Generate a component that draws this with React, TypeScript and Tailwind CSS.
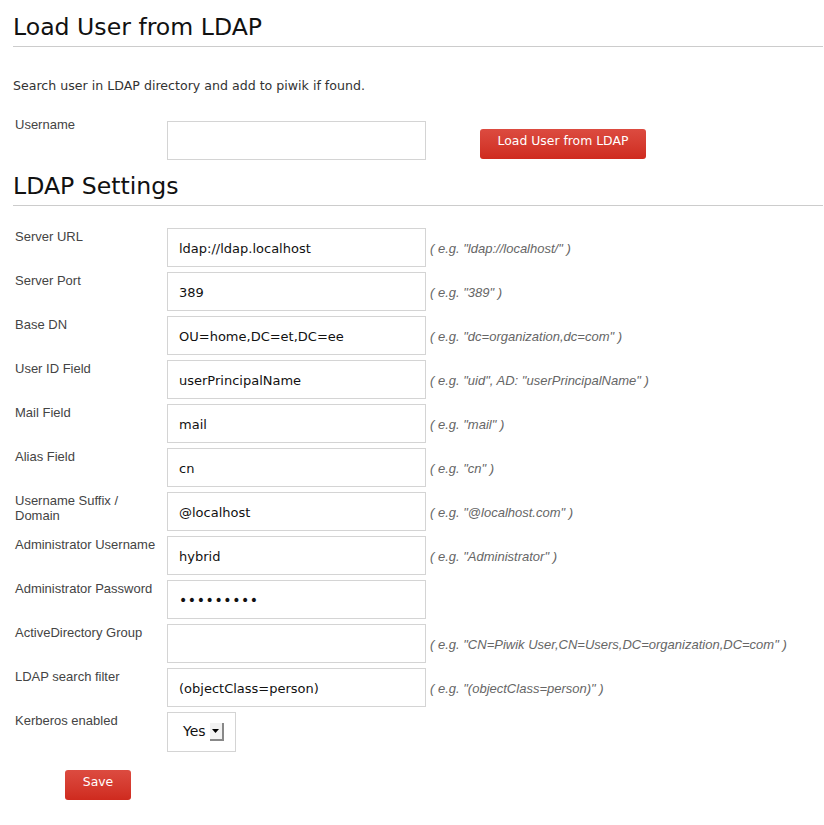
import React from "react";

const dv = { fontFamily: '"DejaVu Sans", sans-serif' } as const;
const lib = { fontFamily: '"Liberation Sans", Arial, sans-serif' } as const;

type Row = { label: string; value?: string; hint?: string; password?: boolean };

const rows: Row[] = [
  { label: "Server URL", value: "ldap://ldap.localhost", hint: '( e.g. "ldap://localhost/" )' },
  { label: "Server Port", value: "389", hint: '( e.g. "389" )' },
  { label: "Base DN", value: "OU=home,DC=et,DC=ee", hint: '( e.g. "dc=organization,dc=com" )' },
  { label: "User ID Field", value: "userPrincipalName", hint: '( e.g. "uid", AD: "userPrincipalName" )' },
  { label: "Mail Field", value: "mail", hint: '( e.g. "mail" )' },
  { label: "Alias Field", value: "cn", hint: '( e.g. "cn" )' },
  { label: "Username Suffix / Domain", value: "@localhost", hint: '( e.g. "@localhost.com" )' },
  { label: "Administrator Username", value: "hybrid", hint: '( e.g. "Administrator" )' },
  { label: "Administrator Password", value: "•••••••••", password: true },
  { label: "ActiveDirectory Group", value: "", hint: '( e.g. "CN=Piwik User,CN=Users,DC=organization,DC=com" )' },
  { label: "LDAP search filter", value: "(objectClass=person)", hint: '( e.g. "(objectClass=person)" )' },
];

function Label({ children, className }: { children: React.ReactNode; className?: string }) {
  return (
    <div className={"w-[146px] mr-[8px] pl-[2px] text-[13px] leading-[15px] text-[#444] " + (className ?? "pt-[1px]")} style={lib}>
      {children}
    </div>
  );
}

function Input({ value, password }: { value?: string; password?: boolean }) {
  return (
    <div className="w-[259px] h-[39px] border border-[#d4d4d4] bg-white flex items-center pl-[11px] pt-[2px]">
      <span className={password ? "text-[14px] tracking-[0.6px] text-[#111]" : "text-[13px] text-[#111]"} style={dv}>
        {value}
      </span>
    </div>
  );
}

function Hint({ children }: { children?: React.ReactNode }) {
  return (
    <div className="ml-[4px] pt-[2px] self-center text-[13px] italic text-[#666]" style={lib}>
      {children}
    </div>
  );
}

function RedButton({ children, className }: { children: React.ReactNode; className?: string }) {
  return (
    <div className={"h-[30px] rounded-[3px] bg-gradient-to-b from-[#dc4b40] to-[#cf2a1e] text-white text-[12.4px] flex items-center justify-center pb-[5px] " + (className ?? "")} style={dv}>
      {children}
    </div>
  );
}

export default function App() {
  return (
    <div className="bg-white w-[824px] min-h-[825px] pl-[13px] pr-[1px]" style={dv}>
      <h2 className="text-[23.6px] leading-[28px] pt-[13px] pb-[5px] border-b border-[#ccc] text-[#111]">
        Load User from LDAP
      </h2>
      <p className="text-[12.6px] text-[#333] mt-[30px]">Search user in LDAP directory and add to piwik if found.</p>
      <div className="flex mt-[25px] h-[39px]">
        <Label className="-mt-[4px]">Username</Label>
        <Input />
        <RedButton className="ml-[54px] mt-[8px] w-[166px]">Load User from LDAP</RedButton>
      </div>
      <h2 className="text-[23.6px] leading-[28px] pt-[12px] pb-[5px] border-b border-[#ccc] text-[#111]">
        LDAP Settings
      </h2>
      <div className="mt-[22px] flex flex-col gap-[5px]">
        {rows.map((r) => (
          <div key={r.label} className="flex">
            <Label>{r.label}</Label>
            <Input value={r.value} password={r.password} />
            <Hint>{r.hint}</Hint>
          </div>
        ))}
        <div className="flex">
          <Label>Kerberos enabled</Label>
          <div className="w-[69px] h-[40px] border border-[#d4d4d4] flex items-center pl-[15px]">
            <span className="text-[14px] text-[#111]" style={dv}>Yes</span>
            <div className="ml-[4px] w-[14px] h-[18px] bg-[#f2f2f2] border-r-2 border-b-2 border-[#888] flex items-center justify-center">
              <svg width="7" height="4" viewBox="0 0 7 4"><polygon points="0,0 7,0 3.5,4" fill="#000" /></svg>
            </div>
          </div>
        </div>
      </div>
      <RedButton className="ml-[52px] mt-[18px] w-[66px]">Save</RedButton>
    </div>
  );
}
